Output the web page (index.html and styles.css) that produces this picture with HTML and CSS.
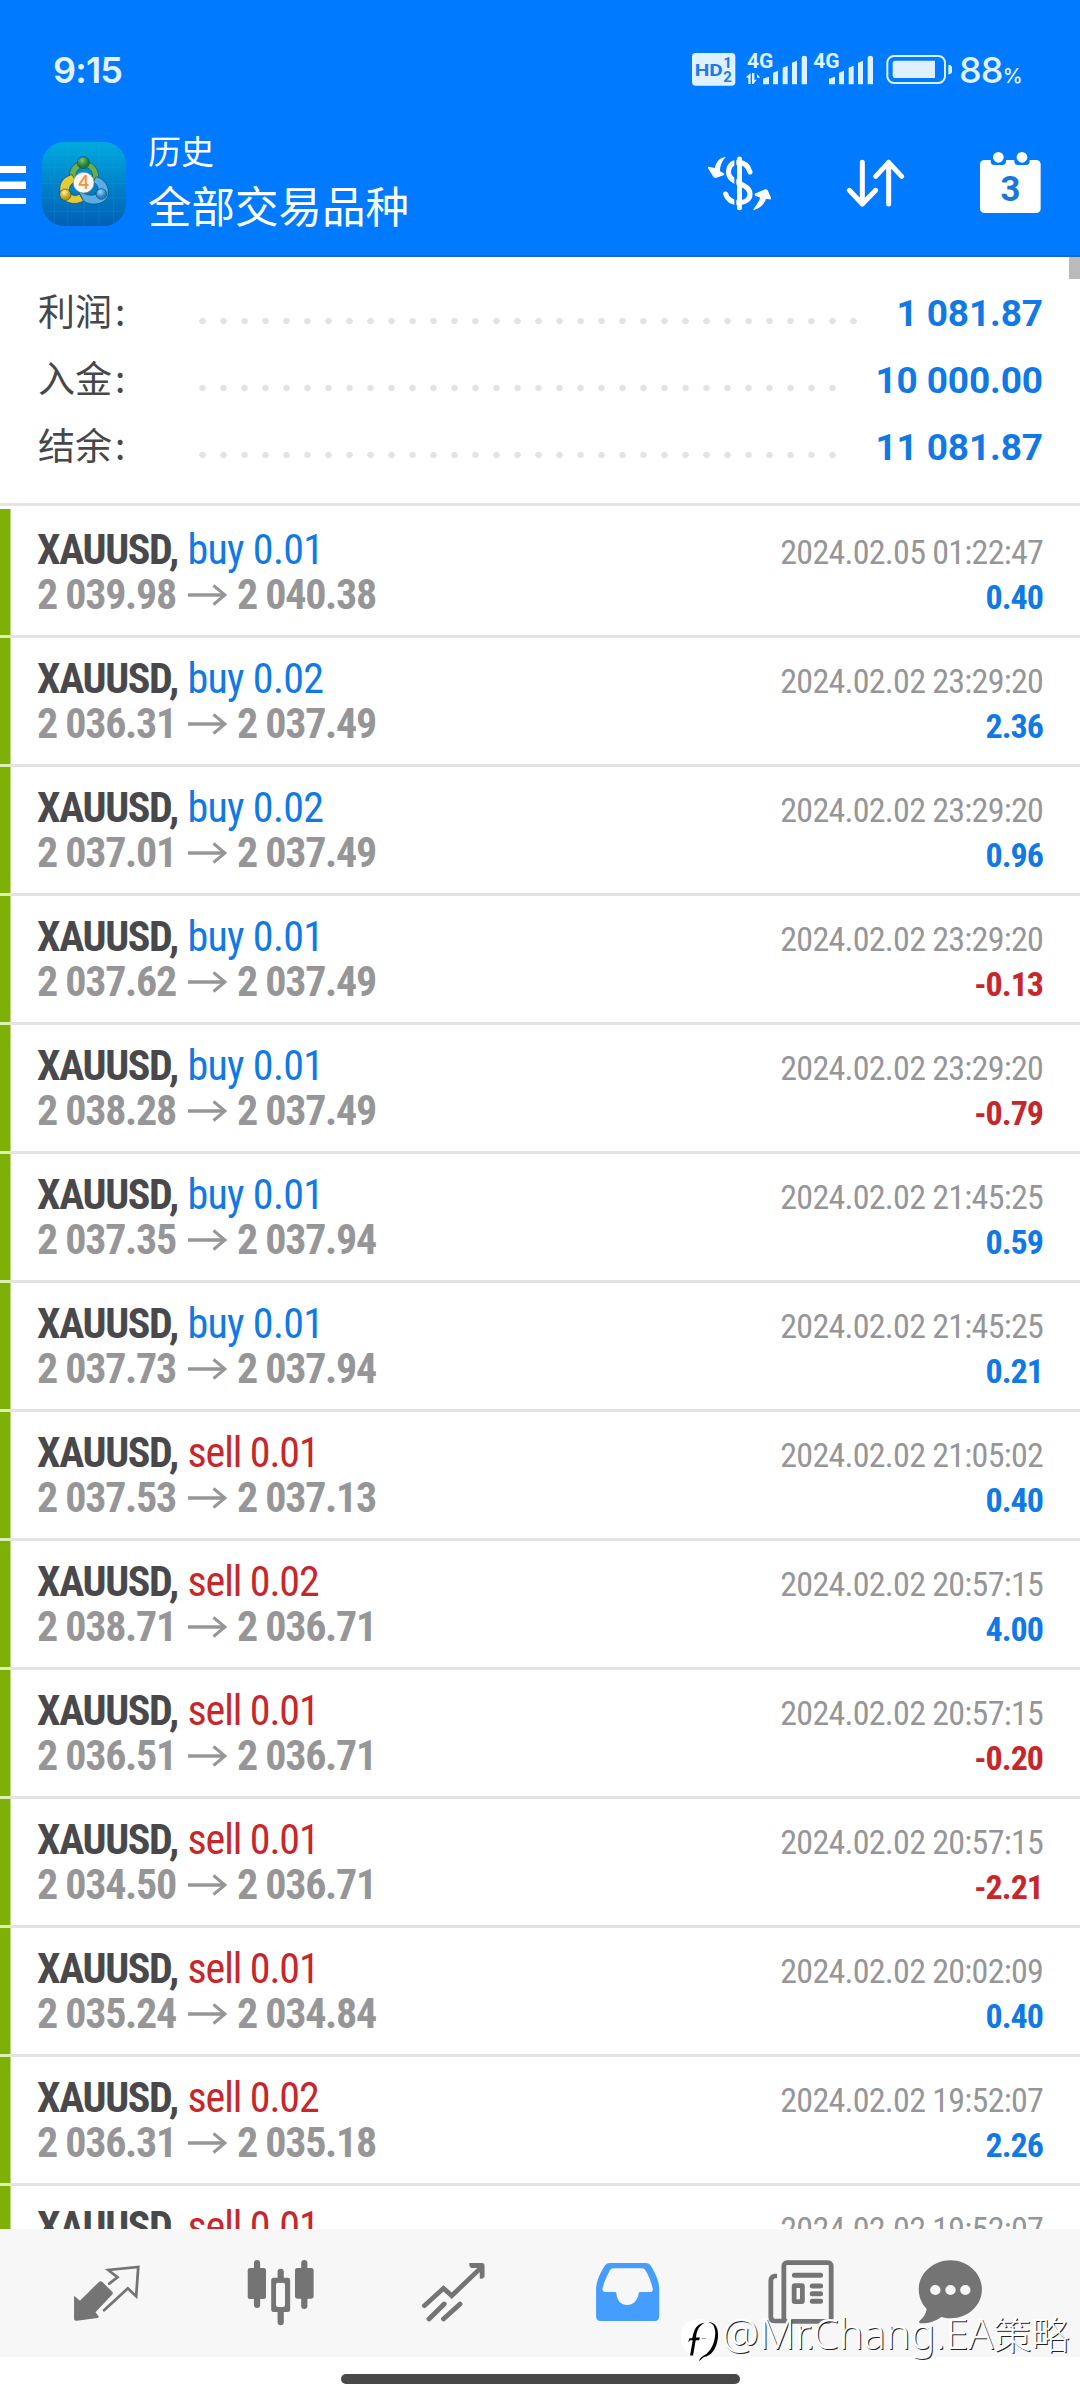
FILE: index.html
```html
<!DOCTYPE html>
<html lang="zh-CN">
<head>
<meta charset="utf-8">
<title>历史</title>
<link rel="stylesheet" href="styles.css">
</head>
<body>
<div class="screen">
<header class="header">
  <div class="status">
    <span class="clock">9:15</span>
    <span class="status-right">
      <svg class="status-icons" viewBox="90 60 792 120" fill="#dff0ff">
        <path fill-rule="evenodd" d="M107 69H215a11 11 0 0 1 11 11V156a11 11 0 0 1-11 11H107a11 11 0 0 1-11-11V80a11 11 0 0 1 11-11Z"/>
        <text x="104" y="138" textLength="84" lengthAdjust="spacingAndGlyphs" class="hd">HD</text>
        <text x="190" y="113" class="hd-num">1</text>
        <text x="190" y="155" class="hd-num">2</text>
        <text x="261" y="114" textLength="79" lengthAdjust="spacingAndGlyphs" class="net">4G</text>
        <text x="460" y="114" textLength="79" lengthAdjust="spacingAndGlyphs" class="net">4G</text>
        <path d="M258 142l14-13v33h-7v-18zM276 129h7v20h7l-10 13h-4zM291 132l10 11h-10z"/>
        <path d="M309 146l18-6v23h-18zM339 128l15-6v41h-15zM368 113l15-6v56h-15zM396 98l15-6v71h-15zM425 83q0-6 8-6t8 6v80h-16z"/>
        <path d="M507 146l18-6v23h-18zM537 128l15-6v41h-15zM566 113l15-6v56h-15zM594 98l15-6v71h-15zM623 83q0-6 8-6t8 6v80h-16z"/>
        <rect x="682" y="78" width="173" height="81" rx="20" fill="none" stroke="#dff0ff" stroke-width="6"/>
        <path d="M705 92h120v52H705a7 7 0 0 1-7-7V99a7 7 0 0 1 7-7zM865 104q11 1 11 8v13q0 7-11 8z"/>
      </svg>
      <span class="battery">88<small>%</small></span>
    </span>
  </div>
  <div class="toolbar">
    <svg class="menu" viewBox="0 0 26 40" fill="#fff"><path d="M0 2h26v7H0zM0 17.500h26v7.500H0zM0 34h26v6H0z"/></svg>
    <svg class="logo" viewBox="36 36 252 252">
      <defs>
        <linearGradient id="sky" x1="0" y1="0" x2="0" y2="1"><stop offset="0" stop-color="#00aadf"/><stop offset=".5" stop-color="#0083cb"/><stop offset="1" stop-color="#0060b4"/></linearGradient>
        <radialGradient id="ballG" cx=".4" cy=".3"><stop offset="0" stop-color="#86c47a"/><stop offset="1" stop-color="#1d7d33"/></radialGradient>
        <radialGradient id="ballY" cx=".4" cy=".3"><stop offset="0" stop-color="#fff3a0"/><stop offset="1" stop-color="#c39c14"/></radialGradient>
        <radialGradient id="ballB" cx=".4" cy=".3"><stop offset="0" stop-color="#9fd8fa"/><stop offset="1" stop-color="#2280c8"/></radialGradient>
      </defs>
      <rect x="36" y="36" width="252" height="252" rx="66" fill="url(#sky)"/>
      <path d="M73 46V278M113 37V287M162 37V287M207 37V287M250 44V280M46 73H278M37 113H287M37 160H287M37 204H287M44 245H280" stroke="#3fb5e8" stroke-opacity=".22" stroke-width="2"/>
      <g stroke="#0c4f6a" stroke-width="2">
        <path d="M119 150C113 110 138 92 164 94C195 96 212 126 204 154L188 146C190 124 178 112 162 112C146 112 136 126 137 144Z" fill="#68b04e"/>
        <path d="M126 134C94 142 82 168 94 198C104 220 138 228 160 212L148 192C138 200 128 198 120 188C114 174 122 160 138 154Z" fill="#e4cb38"/>
        <path d="M198 140C228 148 242 178 232 202C218 228 176 226 160 212L146 184C162 192 188 202 202 190C208 178 204 164 190 156Z" fill="#5aaee8"/>
        <circle cx="160" cy="98" r="18" fill="url(#ballG)"/><circle cx="106" cy="194" r="17" fill="url(#ballY)"/><circle cx="214" cy="192" r="16" fill="url(#ballB)"/>
      </g>
      <circle cx="161" cy="158" r="31" fill="#fbf9f4" stroke="#8a958c" stroke-width="2"/>
      <text x="161" y="178" text-anchor="middle" class="logo-num">4</text>
    </svg>
    <div class="titles"><span class="kicker">历史</span><span class="title">全部交易品种</span></div>
    <svg class="ico-money" viewBox="138 366 198 192">
      <path d="M270 426C263 402 247 397 233 397C215 397 204 410 206 430C208 446 222 453 238 460C256 468 270 476 270 493C270 508 256 518 238 518C218 518 203 512 197 492" fill="none" stroke="#fff" stroke-width="15" stroke-linecap="round"/>
      <path d="M226 390v140" stroke="#007aff" stroke-width="6"/>
      <path d="M238.500 387v146" stroke="#fff" stroke-width="15" stroke-linecap="round"/>
      <path d="M198 381C184 382 170 390 164 414L146 410Q142 412 145 416L160 440Q163 445 169 443L191 436Q195 432 190 429L180 424C180 405 188 390 198 381ZM279 540C286 528 297 515 301 503L286 497Q281 493 288 490L315 478Q320 476 323 481L333 503Q334 510 328 508L318 507C311 526 295 538 279 540Z" fill="#fff"/>
    </svg>
    <svg class="ico-sort" viewBox="555 366 183 192" fill="none" stroke="#fff" stroke-width="15" stroke-linecap="round" stroke-linejoin="round"><path d="M607 397V522M568 481L607 522L647 481M686 522V397M647 439L686 397L725 439"/></svg>
    <svg class="ico-cal" viewBox="957 366 186 192">
      <rect x="960" y="390" width="182" height="159" rx="13" fill="#fff"/>
      <path d="M992 380h46v14q0 11-11 11h-24q-11 0-11-11zM1063 380h46v14q0 11-11 11h-24q-11 0-11-11z" fill="#007aff"/>
      <circle cx="1015" cy="382" r="16" fill="#fff"/><circle cx="1086" cy="382" r="16" fill="#fff"/>
      <text x="1051" y="514" text-anchor="middle" class="cal-num">3</text>
    </svg>
  </div>
</header>
<section class="summary">
  <div class="sum"><span class="label">利润<span class="colon">:</span></span><i class="dots"></i><b>1 081.87</b></div>
  <div class="sum"><span class="label">入金<span class="colon">:</span></span><i class="dots short"></i><b>10 000.00</b></div>
  <div class="sum"><span class="label">结余<span class="colon">:</span></span><i class="dots short"></i><b>11 081.87</b></div>
</section>
<main class="deals" id="deals"></main>
<nav class="tabs">
  <svg class="tab" viewBox="132 111 200 216" preserveAspectRatio="none">
    <path d="M138 227L155 242L210 186Q215 182 220 186L249 216Q252 220 248 224L200 277L209 289Q210 293 206 294L146 302Q138 303 138 297Z" fill="#747474"/>
    <path d="M240 191L264 172L237 150L324 141L318 229L294 205L225 271" fill="none" stroke="#747474" stroke-width="8" stroke-linecap="round"/>
  </svg>
  <svg class="tab" viewBox="713 231 200 216" preserveAspectRatio="none" stroke="#747474" stroke-linecap="round">
    <path d="M745 249V375M882 249V378M813.500 275V300M813.500 395V427" stroke-width="18"/>
    <g fill="#747474" stroke="none"><rect x="718" y="264" width="53" height="93" rx="7"/><rect x="855" y="264" width="54" height="92" rx="7"/><path fill-rule="evenodd" d="M793 293h41q7 0 7 7v89q0 7-7 7h-41q-7 0-7-7v-89q0-7 7-7zM806 308q-6 0-6 6v61q0 6 6 6h14q6 0 6-6v-61q0-6-6-6z"/></g>
  </svg>
  <svg class="tab" viewBox="1216 231 200 216" preserveAspectRatio="none" fill="none" stroke="#747474" stroke-width="14" stroke-linecap="round">
    <path d="M1232 377L1287 325L1311 347L1393 266M1245 417L1289 372M1287 417L1335 372"/><path d="M1362 249H1398Q1406 249 1406 257V290Q1402 298 1392 296V264H1368Q1360 260 1362 249Z" fill="#747474" stroke="none"/>
  </svg>
  <svg class="tab" viewBox="153 231 200 216" preserveAspectRatio="none">
    <path fill="#459dfd" fill-rule="evenodd" d="M200 249H306Q316 249 321 258C334 280 345 304 345 328V409Q345 423 332 423H175Q162 423 162 409V328C162 304 174 278 187 257Q192 249 200 249ZM212 265Q205 265 202 271C193 289 184 308 181 325Q179 336 189 336H217Q221 336 221 341C222 361 235 375 252 375C269 375 283 361 285 341Q285 336 290 336H318Q328 336 326 325C322 308 315 288 305 271Q302 265 295 265Z"/>
  </svg>
  <svg class="tab wide" viewBox="655 231 210 216" preserveAspectRatio="none" fill="none" stroke="#747474" stroke-width="14">
    <rect x="710" y="248" width="138" height="176" rx="9"/><path d="M690 288H684Q672 290 672 302V410Q672 423 684 423H712"/><path d="M741 286H817M793 318H817M793 341H817M793 364H817" stroke-width="15" stroke-linecap="round"/><rect x="740" y="317" width="24" height="48" stroke-width="14" rx="2"/>
  </svg>
  <svg class="tab" viewBox="1094 231 200 216" preserveAspectRatio="none">
    <path d="M1194 241C1245 241 1285 281 1285 328C1285 377 1245 415 1194 415C1185 415 1176 413 1167 411C1150 424 1130 431 1106 430Q1101 428 1104 423C1115 414 1123 402 1125 387C1110 371 1102 351 1102 328C1102 281 1143 241 1194 241Z" fill="#747474"/><g fill="#f7f7f7"><circle cx="1150" cy="330" r="15"/><circle cx="1194" cy="330" r="15"/><circle cx="1237" cy="330" r="15"/></g>
  </svg>
</nav>
<footer class="home"><span class="pill"></span></footer>
<i class="scrollbar"></i>
<div class="mark">
  <svg class="mark-logo" viewBox="0 80 120 136"><path d="M16 100Q60 72 98 100Q118 130 106 170Q90 196 60 200Q10 190 4 160Q0 120 16 100Z" fill="#fff"/><path d="M84 95C108 95 117 114 114 144C110 178 92 198 72 201L57 214C61 200 70 198 80 191C98 176 107 148 106 124C104 106 98 99 84 95ZM74 97C56 99 45 112 42 124C38 136 38 142 36 144H28L24 156L30 150H38L30 196H39L47 150H57L60 142H48C50 118 58 106 74 97Z" fill="#000"/><path d="M66 145H78" stroke="#999" stroke-width="3"/></svg>
  <span class="mark-text">@Mr.Chang.EA<em>策略</em></span>
</div>
</div>
<script src="deals.js"></script>
</body>
</html>
```
FILE: deals.js
```js
const deals = [
  ["buy 0.01", "2 039.98", "2 040.38", "2024.02.05 01:22:47", "0.40"],
  ["buy 0.02", "2 036.31", "2 037.49", "2024.02.02 23:29:20", "2.36"],
  ["buy 0.02", "2 037.01", "2 037.49", "2024.02.02 23:29:20", "0.96"],
  ["buy 0.01", "2 037.62", "2 037.49", "2024.02.02 23:29:20", "-0.13"],
  ["buy 0.01", "2 038.28", "2 037.49", "2024.02.02 23:29:20", "-0.79"],
  ["buy 0.01", "2 037.35", "2 037.94", "2024.02.02 21:45:25", "0.59"],
  ["buy 0.01", "2 037.73", "2 037.94", "2024.02.02 21:45:25", "0.21"],
  ["sell 0.01", "2 037.53", "2 037.13", "2024.02.02 21:05:02", "0.40"],
  ["sell 0.02", "2 038.71", "2 036.71", "2024.02.02 20:57:15", "4.00"],
  ["sell 0.01", "2 036.51", "2 036.71", "2024.02.02 20:57:15", "-0.20"],
  ["sell 0.01", "2 034.50", "2 036.71", "2024.02.02 20:57:15", "-2.21"],
  ["sell 0.01", "2 035.24", "2 034.84", "2024.02.02 20:02:09", "0.40"],
  ["sell 0.02", "2 036.31", "2 035.18", "2024.02.02 19:52:07", "2.26"],
  ["sell 0.01", "", "", "2024.02.02 19:52:07", ""]
];
const arrow = '<svg class="arrow" viewBox="0 0 39 22" fill="none" stroke="#969696"><path d="M0 11H36" stroke-width="3.5"/><path d="M25.500 1.500L37 11L25.500 20.500" stroke-width="3"/></svg>';
document.getElementById("deals").innerHTML = deals.map(([side, from, to, time, profit]) => `
  <article class="deal">
    <div class="left">
      <div class="line"><span class="symbol">XAUUSD,</span><span class="${side.split(" ")[0]}">${side}</span></div>
      ${from && `<div class="line price"><span class="from">${from}</span>${arrow}<span>${to}</span></div>`}
    </div>
    <div class="right">
      <div class="line time">${time}</div>
      ${profit && `<div class="line profit ${profit[0] === "-" ? "loss" : ""}">${profit}</div>`}
    </div>
  </article>`).join("");
```
FILE: styles.css
```css
* { box-sizing: border-box; }
body { margin: 0; background: #fff; font-family: Roboto, "Noto Sans CJK SC", sans-serif; }
svg { display: block; flex: none; }
.screen { position: relative; display: flex; flex-direction: column; width: 1080px; height: 2400px; overflow: hidden; }

.header { flex: none; height: 257px; background: #007aff; border-bottom: 2px solid #1768c0; color: #fff; }
.status { height: 110px; padding: 30px 58px 0 53px; display: flex; justify-content: space-between; align-items: flex-start; color: #e2f3ff; font-family: Inter, sans-serif; font-weight: 600; }
.clock { font-size: 36px; line-height: 80px; letter-spacing: -0.800px; }
.status-right { display: flex; align-items: flex-start; gap: 5px; }
.status-icons { width: 264px; height: 40px; margin-top: 20px; }
.battery { font-size: 36px; line-height: 80px; letter-spacing: -0.800px; width: 63px; white-space: nowrap; font-weight: 500; }
.battery small { font-size: 20px; }
.hd { font: 700 52px Roboto, sans-serif; fill: #1a7cf0; }
.hd-num { font: 700 45px Roboto, sans-serif; fill: #1a7cf0; }
.net { font: 700 60px Roboto, sans-serif; }
.toolbar { height: 148px; padding-right: 39px; display: flex; align-items: center; }
.menu { width: 26px; height: 40px; }
.logo { width: 84px; height: 84px; margin: 0 22px 0 16px; }
.logo-num { font: 700 54px Lato, sans-serif; fill: #f0953c; }
.titles { flex: 1; display: flex; flex-direction: column; margin-top: -8px; font-family: "Noto Sans CJK SC", sans-serif; }
.kicker { font-size: 33px; line-height: 49px; }
.title { font-size: 43.500px; line-height: 59px; }
.ico-money { width: 66px; height: 64px; overflow: visible; }
.ico-sort { width: 61px; height: 64px; margin: 0 73px; }
.ico-cal { width: 62px; height: 64px; overflow: visible; }
.cal-num { font: 700 104px Roboto, sans-serif; fill: #1877d8; }

.summary { flex: none; padding: 23px 37px 22px 38px; border-bottom: 3px solid #e4e4e6; margin-bottom: 3px; }
.sum { display: flex; align-items: center; height: 67px; }
.label { width: 154px; padding-bottom: 8px; font: 37px/58px "Noto Sans CJK SC", sans-serif; color: #47474a; }
.colon { margin-left: 3px; }
.dots { width: 672px; height: 8px; margin-top: 14px; background: radial-gradient(circle at center, #e3e3e5 2.800px, transparent 3.700px) 0 0 / 21px 8px; }
.dots.short { width: 651px; }
.sum b { margin-left: auto; font: 700 37px/67px Roboto, sans-serif; letter-spacing: -0.100px; color: #1079e6; }

.deals { flex: 1; overflow: hidden; font-family: "Roboto Condensed", Roboto, sans-serif; font-size: 42px; line-height: 45px; }
.deal { display: flex; justify-content: space-between; height: 129px; padding: 18px 37px 0 37px; background: linear-gradient(#dcefb4, #dcefb4) 0 100% / 11px 3px no-repeat, linear-gradient(#e3e3e5, #e3e3e5) 0 100% / 100% 3px no-repeat, linear-gradient(#7fb007, #7fb007) 0 0 / 10.500px 100% no-repeat; }
.line { display: flex; align-items: center; height: 45px; white-space: pre; }
.symbol { width: 150.500px; font-weight: 700; letter-spacing: -1.350px; color: #49494c; }
.buy { color: #1079e6; letter-spacing: -0.700px; }
.sell { color: #c7262a; letter-spacing: -1.100px; }
.price { font-weight: 700; letter-spacing: -1.300px; color: #969698; }
.from { width: 151px; }
.arrow { width: 39px; height: 22px; margin: 0 10px 0 0; }
.right { padding-top: 3px; display: flex; flex-direction: column; align-items: flex-end; font-size: 34px; }
.time { letter-spacing: -0.730px; color: #969698; }
.profit { font-weight: 700; letter-spacing: -1px; color: #1079e6; }
.loss { color: #c7262a; }

.tabs { flex: none; height: 128px; padding-left: 20px; background: #f7f7f7; display: grid; grid-template-columns: repeat(5, 173.500px) 125px; align-items: center; justify-items: center; }
.tab { width: 69px; height: 72px; }
.tab.wide { width: 72px; }
.home { flex: none; height: 43px; padding-top: 17px; display: flex; justify-content: center; }
.pill { width: 399px; height: 10px; border-radius: 5px; background: #484848; }
.scrollbar { position: absolute; right: 0; top: 257px; width: 11px; height: 22px; background: #bababa; }
.mark { position: absolute; left: 680px; top: 2317px; display: flex; align-items: flex-start; }
.mark-logo { width: 40px; height: 45px; }
.mark-text { margin-left: 2px; font: 300 41.500px/48px "Noto Sans", "Open Sans", sans-serif; color: #fff; text-shadow: 1px 1px 0 #222; white-space: nowrap; margin-top: -8px; }
.mark-text em { font: 300 38px/48px "Noto Sans CJK SC", sans-serif; }
```
